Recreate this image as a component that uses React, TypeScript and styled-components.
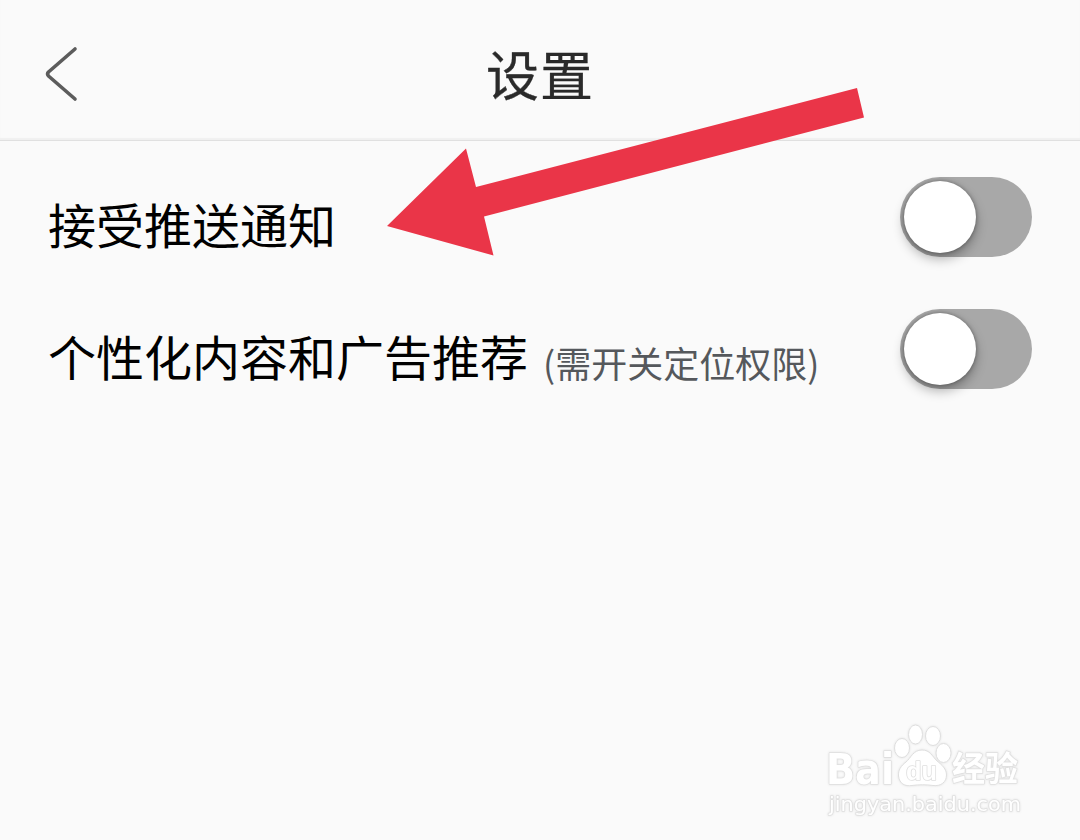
import React, { useState } from "react"
import styled, { createGlobalStyle } from "styled-components"

const GlobalStyle = createGlobalStyle`
  * {
    box-sizing: border-box;
  }
  body {
    margin: 0;
    background: #fafafa;
    font-family: "Noto Sans CJK SC", sans-serif;
  }
`

const Wrapper = styled.div`
  position: relative;
  display: flex;
  flex-direction: column;
  width: 1080px;
  height: 840px;
  overflow: hidden;
  background: #fafafa;
`

const Header = styled.header`
  display: grid;
  grid-template-columns: 120px 1fr 120px;
  align-items: center;
  height: 141px;
  border-bottom: 1px solid #e0e0e0;
  box-shadow: inset 0 -2px 1px #f0f0f0;
`

const BackButton = styled.button`
  display: flex;
  justify-content: center;
  margin-top: 7px;
  padding: 0 0 0 1px;
  border: none;
  background: none;
`

const Title = styled.h1`
  margin: 6px 0 0;
  color: #2a2a2a;
  font-size: 53px;
  font-weight: 400;
  line-height: 80px;
  letter-spacing: 1px;
  text-align: center;
  -webkit-text-stroke: 0.3px #2a2a2a;
`

const List = styled.main`
  display: flex;
  flex-direction: column;
  padding: 10px 48px 0;
`

const Row = styled.div`
  display: flex;
  align-items: center;
  justify-content: space-between;
  height: 132px;
`

const Label = styled.div`
  display: flex;
  align-items: baseline;
  gap: 15px;
  padding-top: 11px;
  color: #000;
  font-size: 48px;
  line-height: 72px;
  white-space: nowrap;
`

const Hint = styled.span`
  color: #55585c;
  font-size: 36px;
  line-height: 54px;
  transform: translateY(2px);
`

const Track = styled.button<{ $on: boolean }>`
  display: flex;
  justify-content: ${({ $on }) => ($on ? "flex-end" : "flex-start")};
  width: 132px;
  height: 80px;
  padding: 4px;
  border: none;
  border-radius: 40px;
  background: ${({ $on }) => ($on ? "#4caf50" : "#a8a8a8")};
`

const Knob = styled.span`
  width: 72px;
  height: 72px;
  border-radius: 50%;
  background: #fff;
  box-shadow:
    0 0 4px rgba(0, 0, 0, 0.35),
    0 6px 12px rgba(0, 0, 0, 0.3);
`

const Arrow = styled.svg`
  position: absolute;
  top: 80px;
  left: 380px;
  pointer-events: none;
`

const Watermark = styled.svg`
  position: absolute;
  top: 710px;
  left: 810px;
  filter: drop-shadow(0 0 1px rgba(0, 0, 0, 0.1));
  pointer-events: none;

  text {
    fill: #fff;
    stroke: #dfdfdf;
    stroke-width: 1.6px;
    stroke-linejoin: round;
    paint-order: stroke;
  }
`

type Setting = {
  id: string
  label: string
  hint?: string
}

const settings: Setting[] = [
  { id: "push", label: "接受推送通知" },
  { id: "recommend", label: "个性化内容和广告推荐", hint: "(需开关定位权限)" },
]

const SettingRow: React.FC<{ setting: Setting }> = ({ setting }) => {
  const [on, setOn] = useState<boolean>(false)

  return (
    <Row>
      <Label>
        {setting.label}
        {setting.hint && <Hint>{setting.hint}</Hint>}
      </Label>
      <Track
        $on={on}
        role="switch"
        aria-checked={on}
        aria-label={setting.label}
        onClick={() => setOn(!on)}
      >
        <Knob />
      </Track>
    </Row>
  )
}

const App: React.FC = () => {
  return (
    <>
      <GlobalStyle />
      <Wrapper>
        <Header>
          <BackButton aria-label="返回">
            <svg width="36" height="60" viewBox="0 0 36 60" fill="none">
              <path
                d="M32 5L5.5 28Q3.7 30 5.5 32L32 55"
                stroke="#5c5c5c"
                strokeWidth="3.6"
                strokeLinecap="round"
                strokeLinejoin="round"
              />
            </svg>
          </BackButton>
          <Title>设置</Title>
        </Header>
        <List>
          {settings.map((setting) => (
            <SettingRow key={setting.id} setting={setting} />
          ))}
        </List>
        <Arrow width="490" height="180" viewBox="380 80 490 180">
          <path
            d="M387 226L466 148.5L476 187L857 88L864 117.5L484 216.5L493.5 255.5Z"
            fill="#ea3548"
          />
        </Arrow>
        <Watermark width="230" height="120" viewBox="0 0 230 120">
          <g fill="#fff" stroke="#dedede" strokeWidth="1">
            <ellipse cx="92" cy="38" rx="7.5" ry="9.5" />
            <ellipse cx="105.5" cy="24.5" rx="7" ry="9.5" />
            <ellipse cx="123" cy="26" rx="7.5" ry="9.5" />
            <ellipse cx="133.5" cy="43" rx="7.5" ry="9.5" />
            <path d="M112 40C103 40 101 48 96 52C91 56 88 60 88.5 66C89.5 74 95 76.5 102 75.5C109 74.5 116 74.5 123 75.5C131 76.5 136.5 72 136.5 65C136.5 59 132 55 127 51C122 46 120 40 112 40Z" />
          </g>
          <text
            x="16"
            y="73.5"
            fontFamily="DejaVu Sans, sans-serif"
            fontSize="42"
            fontWeight="700"
            textLength="68"
            lengthAdjust="spacingAndGlyphs"
          >
            Bai
          </text>
          <text
            x="96"
            y="69.5"
            fontFamily="Liberation Sans, sans-serif"
            fontSize="25"
            fontWeight="700"
            textLength="31"
            lengthAdjust="spacingAndGlyphs"
          >
            du
          </text>
          <text
            x="142"
            y="71"
            fontFamily="Noto Sans CJK SC, sans-serif"
            fontSize="34"
            fontWeight="700"
            textLength="66"
            lengthAdjust="spacingAndGlyphs"
          >
            经验
          </text>
          <text
            x="19"
            y="100.5"
            fontFamily="DejaVu Sans, sans-serif"
            fontSize="20"
            textLength="192"
            lengthAdjust="spacingAndGlyphs"
          >
            jingyan.baidu.com
          </text>
        </Watermark>
      </Wrapper>
    </>
  )
}

export default App
